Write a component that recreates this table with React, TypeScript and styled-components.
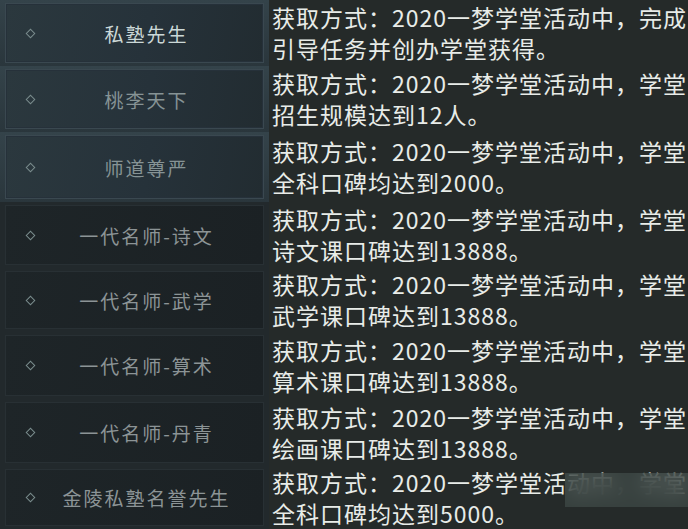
import React from "react";
import styled, { createGlobalStyle, css } from "styled-components";

const Global = createGlobalStyle`
  html, body { margin: 0; padding: 0; background: #202628; }
  body { font-family: "Noto Sans CJK SC", "Noto Sans", sans-serif; }
`;

type Item = {
  title: string;
  lines: [string, string];
  h: number;
  tone: "light" | "dark";
  active?: boolean;
  blurred?: boolean;
};

const items: Item[] = [
  { title: "私塾先生", lines: ["获取方式：2020一梦学堂活动中，完成", "引导任务并创办学堂获得。"], h: 66, tone: "light", active: true },
  { title: "桃李天下", lines: ["获取方式：2020一梦学堂活动中，学堂", "招生规模达到12人。"], h: 66, tone: "light" },
  { title: "师道尊严", lines: ["获取方式：2020一梦学堂活动中，学堂", "全科口碑均达到2000。"], h: 70, tone: "light" },
  { title: "一代名师-诗文", lines: ["获取方式：2020一梦学堂活动中，学堂", "诗文课口碑达到13888。"], h: 66, tone: "dark" },
  { title: "一代名师-武学", lines: ["获取方式：2020一梦学堂活动中，学堂", "武学课口碑达到13888。"], h: 64, tone: "dark" },
  { title: "一代名师-算术", lines: ["获取方式：2020一梦学堂活动中，学堂", "算术课口碑达到13888。"], h: 67, tone: "dark" },
  { title: "一代名师-丹青", lines: ["获取方式：2020一梦学堂活动中，学堂", "绘画课口碑达到13888。"], h: 67, tone: "dark" },
  { title: "金陵私塾名誉先生", lines: ["获取方式：2020一梦学堂活动中，学堂", "全科口碑均达到5000。"], h: 63, tone: "dark", blurred: true },
];

const Page = styled.div`
  width: 688px;
  height: 529px;
  overflow: hidden;
  display: flex;
  flex-direction: column;
`;

const Row = styled.div<{ $h: number }>`
  display: grid;
  grid-template-columns: 269px 1fr;
  height: ${(p) => p.$h}px;
`;

const LeftCell = styled.div<{ $tone: "light" | "dark" }>`
  padding: 3px 5px 3px 5px;
  display: flex;
  ${(p) =>
    p.$tone === "light"
      ? css`background: linear-gradient(180deg, #34434a 0%, #2a363c 100%);`
      : css`background: #22292c;`}
`;

const TitleButton = styled.div<{ $tone: "light" | "dark"; $active?: boolean }>`
  flex: 1;
  display: flex;
  align-items: center;
  box-sizing: border-box;
  ${(p) =>
    p.$tone === "light"
      ? css`
          background: linear-gradient(100deg, #2b383e 0%, #26323a 55%, #222c31 100%);
          border: 1px solid #3a4850;
          box-shadow: inset 0 0 0 1px #26313a;
        `
      : css`
          background: linear-gradient(100deg, #1e2528 0%, #1b2124 100%);
          border: 1px solid #283034;
        `}
  color: ${(p) => (p.$active ? "#cbd8d7" : p.$tone === "light" ? "#869395" : "#8c9496")};
`;

const Diamond = styled.span`
  width: 5px;
  height: 5px;
  margin-left: 21px;
  border: 1.5px solid #7a8c8d;
  transform: rotate(45deg);
  flex: none;
`;

const Label = styled.span`
  flex: 1;
  text-align: center;
  font-size: 19px;
  letter-spacing: 2px;
  white-space: nowrap;
  padding-right: 4px;
`;

const TextCell = styled.div`
  position: relative;
  background: #252a29;
  padding-left: 3px;
  display: flex;
  flex-direction: column;
  justify-content: center;
  color: #e8ece8;
  font-size: 23px;
  line-height: 31px;
  letter-spacing: 1px;
  white-space: nowrap;
  overflow: hidden;
`;

const Line = styled.span`
  display: block;
`;

const BlurPatch = styled.div`
  position: absolute;
  left: 296px;
  top: 7px;
  width: 130px;
  height: 34px;
  backdrop-filter: blur(10px);
  background: rgba(62, 74, 70, 0.72);
`;

export default function App() {
  return (
    <>
      <Global />
      <Page>
        {items.map((it) => (
          <Row key={it.title} $h={it.h}>
            <LeftCell $tone={it.tone}>
              <TitleButton $tone={it.tone} $active={it.active}>
                <Diamond />
                <Label>{it.title}</Label>
              </TitleButton>
            </LeftCell>
            <TextCell>
              <Line>{it.lines[0]}</Line>
              <Line>{it.lines[1]}</Line>
              {it.blurred && <BlurPatch />}
            </TextCell>
          </Row>
        ))}
      </Page>
    </>
  );
}
